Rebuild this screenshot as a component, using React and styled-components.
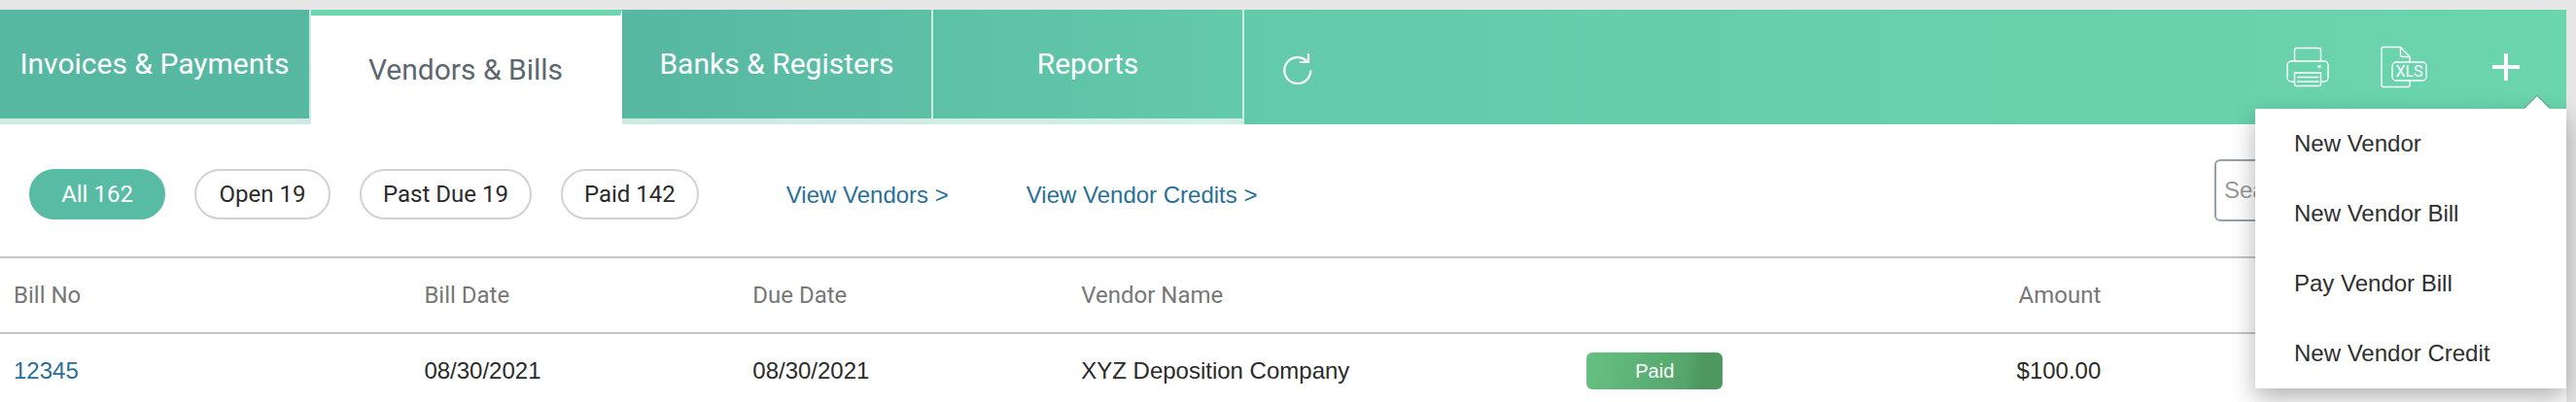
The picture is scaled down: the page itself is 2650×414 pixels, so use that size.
import React, { useState } from 'react';
import styled, { createGlobalStyle } from 'styled-components';

const tabs = ['Invoices & Payments', 'Vendors & Bills', 'Banks & Registers', 'Reports'];
const filters = ['All 162', 'Open 19', 'Past Due 19', 'Paid 142'];
const actions = ['New Vendor', 'New Vendor Bill', 'Pay Vendor Bill', 'New Vendor Credit'];
const bills = [
  { no: '12345', billDate: '08/30/2021', dueDate: '08/30/2021', vendor: 'XYZ Deposition Company', status: 'Paid', amount: '$100.00' },
];

const RefreshIcon = () => (
  <svg width="30" height="32" viewBox="0 0 30 32" fill="none" stroke="#fff" strokeWidth="2.2">
    <path d="M28.300 17.500a13.500 13.500 0 1 1-3.800-9.300" />
    <path d="M26 0v9H17" />
  </svg>
);

const PrintIcon = () => (
  <svg width="44" height="42" viewBox="0 0 44 42" fill="none" stroke="#fff" strokeWidth="1.4">
    <path d="M8.500 15V3.500a2 2 0 0 1 2-2h23a2 2 0 0 1 2 2V15" />
    <path d="M8.500 36H5a4 4 0 0 1-4-4V19a4 4 0 0 1 4-4h34a4 4 0 0 1 4 4v13a4 4 0 0 1-4 4h-3.500" />
    <path d="M8.500 27h27v11.500a2 2 0 0 1-2 2h-23a2 2 0 0 1-2-2zM11 31.500h22.500M11 36h22.500" />
    <circle cx="34" cy="20.500" r="1" fill="#fff" />
  </svg>
);

const XlsIcon = () => (
  <svg width="48" height="44" viewBox="0 0 48 44" fill="none" stroke="#fff" strokeWidth="1.4">
    <path d="M30 17v-5.500L20.500 1.500H3a2 2 0 0 0-2 2v37a2 2 0 0 0 2 2h25a2 2 0 0 0 2-2V36" />
    <path d="M20.500 1.500v8a2 2 0 0 0 2 2H30" />
    <rect x="12" y="17" width="35" height="19" rx="4" />
    <text x="29.500" y="32" textAnchor="middle" fontFamily="Roboto, sans-serif" fontSize="16" fill="#fff" stroke="none">XLS</text>
  </svg>
);

const PlusIcon = () => (
  <svg width="28" height="28" viewBox="0 0 28 28" stroke="#fff" strokeWidth="4">
    <path d="M14 0v28M0 14h28" />
  </svg>
);

const App = () => {
  const [tab, setTab] = useState('Vendors & Bills');
  const [filter, setFilter] = useState('All 162');
  const [open, setOpen] = useState(true);

  return (
    <>
      <GlobalStyle />
      <Page>
        <Header>
          <Tabs>
            {tabs.map(name => (
              <Tab key={name} $active={tab === name} onClick={() => setTab(name)}>{name}</Tab>
            ))}
          </Tabs>
          <RefreshButton aria-label="Refresh"><RefreshIcon /></RefreshButton>
          <Tools>
            <IconButton $width={96} aria-label="Print"><PrintIcon /></IconButton>
            <IconButton $width={102} aria-label="Export to XLS"><XlsIcon /></IconButton>
            <IconButton $width={108} aria-label="Add" aria-expanded={open} onClick={() => setOpen(!open)}><PlusIcon /></IconButton>
          </Tools>
          {open && (
            <Menu>
              {actions.map(name => <MenuItem key={name}>{name}</MenuItem>)}
            </Menu>
          )}
        </Header>
        <Toolbar>
          <Filters>
            {filters.map(name => (
              <Pill key={name} $active={filter === name} onClick={() => setFilter(name)}>{name}</Pill>
            ))}
          </Filters>
          <Links>
            <Link href="#vendors">View Vendors &gt;</Link>
            <Link href="#credits">View Vendor Credits &gt;</Link>
          </Links>
          <Search type="search" placeholder="Search" aria-label="Search" />
        </Toolbar>
        <Table>
          <colgroup>
            <Col $width={16} />
            <Col $width={12.8} />
            <Col $width={12.8} />
            <Col $width={19.7} />
            <Col $width={10} />
            <Col $width={11.1} />
            <Col $width={17.6} />
          </colgroup>
          <thead>
            <tr>
              <Th>Bill No</Th>
              <Th>Bill Date</Th>
              <Th>Due Date</Th>
              <Th>Vendor Name</Th>
              <Th />
              <Th $right>Amount</Th>
              <Th />
            </tr>
          </thead>
          <tbody>
            {bills.map(bill => (
              <tr key={bill.no}>
                <Td><Link href="#bill">{bill.no}</Link></Td>
                <Td>{bill.billDate}</Td>
                <Td>{bill.dueDate}</Td>
                <Td>{bill.vendor}</Td>
                <Td><Badge>{bill.status}</Badge></Td>
                <Td $right>{bill.amount}</Td>
                <Td />
              </tr>
            ))}
          </tbody>
        </Table>
      </Page>
    </>
  );
};

const GlobalStyle = createGlobalStyle`
  * {
    box-sizing: border-box;
  }
  body {
    margin: 0;
    background: #e6e6e6;
    color: #2b2b2b;
    font-family: 'Liberation Sans', Arial, sans-serif;
    font-size: 24px;
  }
  button, input {
    font: inherit;
  }
`
const Badge = styled.span`
  display: block;
  width: 140px;
  border-radius: 6px;
  background: linear-gradient(100deg, #66c182, #56a56c 72%, #4c985f 84%, #4c985f);
  color: #fff;
  font-size: 20px;
  line-height: 38px;
  text-align: center;
`
const Col = styled.col`
  width: ${({ $width }) => $width}%;
`
const Filters = styled.div`
  display: flex;
  gap: 30px;
  padding-top: 8px;
`
const Header = styled.header`
  position: relative;
  display: flex;
  align-items: center;
  background: linear-gradient(90deg, #57b8a2 25%, #64cbaa 50%, #6bd5ae);
`
const IconButton = styled.button`
  display: flex;
  align-items: center;
  justify-content: center;
  width: ${({ $width }) => $width}px;
  height: 100px;
  border: 0;
  padding: 0;
  background: none;
  cursor: pointer;
`
const RefreshButton = styled(IconButton)`
  width: 110px;
  padding-top: 4px;
`
const Link = styled.a`
  color: #2a6f97;
  text-decoration: none;
`
const Links = styled.nav`
  display: flex;
  gap: 80px;
  margin-left: 90px;
  padding-top: 10px;
`
const Menu = styled.div`
  position: absolute;
  top: 102px;
  right: 0;
  z-index: 2;
  width: 320px;
  background: #fff;
  box-shadow: 0 10px 24px rgba(0, 0, 0, 0.3);
  &:before {
    content: '';
    position: absolute;
    top: -13px;
    right: 17px;
    border: 13px solid transparent;
    border-top: 0;
    border-bottom-color: #fff;
    filter: drop-shadow(0 -1px 0 rgba(0, 0, 0, 0.3));
  }
`
const MenuItem = styled.button`
  display: block;
  width: 100%;
  border: 0;
  padding: 0 40px;
  background: none;
  color: #2f2f2f;
  line-height: 72px;
  text-align: left;
  cursor: pointer;
`
const Page = styled.main`
  margin: 10px 10px 0 0;
  min-height: calc(100vh - 10px);
  background: #fff;
`
const Pill = styled.button`
  min-width: 140px;
  height: 52px;
  border: 2px solid ${({ $active }) => ($active ? '#58bba4' : '#d2d2d2')};
  border-radius: 26px;
  padding: 0 22px;
  background: ${({ $active }) => ($active ? '#58bba4' : '#fff')};
  color: ${({ $active }) => ($active ? '#fff' : '#2b2b2b')};
  font-family: Roboto, sans-serif;
  cursor: pointer;
`
const Search = styled.input`
  width: 320px;
  height: 64px;
  margin-left: auto;
  border: 2px solid #93a1ae;
  border-radius: 6px;
  padding: 0 8px;
  background: #fff;
  &::placeholder {
    color: #999;
  }
`
const Tab = styled.button`
  width: 320px;
  height: 118px;
  border: 0 solid rgba(255, 255, 255, 0.7);
  border-width: 0 2px 6px 0;
  padding: 0 0 2px;
  background: none;
  color: #fff;
  font-family: Roboto, sans-serif;
  font-size: 30px;
  cursor: pointer;
  ${({ $active }) => $active && `
    border-width: 6px 2px 0 0;
    border-top-color: #6bd5ae;
    background: #fff;
    color: #5c6770;
  `}
`
const Table = styled.table`
  width: 100%;
  border-spacing: 0;
  table-layout: fixed;
`
const Tabs = styled.nav`
  display: flex;
`
const Td = styled.td`
  height: 76px;
  padding: 0 14px;
  text-align: ${({ $right }) => ($right ? 'right' : 'left')};
`
const Th = styled.th`
  height: 80px;
  border: solid #c4c4c4;
  border-width: 2px 0;
  padding: 0 14px;
  color: #777;
  font-family: Roboto, sans-serif;
  font-weight: 400;
  text-align: ${({ $right }) => ($right ? 'right' : 'left')};
`
const Toolbar = styled.div`
  display: flex;
  align-items: center;
  height: 136px;
  padding: 0 42px 0 30px;
`
const Tools = styled.div`
  display: flex;
  margin-left: auto;
  padding-right: 8px;
`

export default App;
